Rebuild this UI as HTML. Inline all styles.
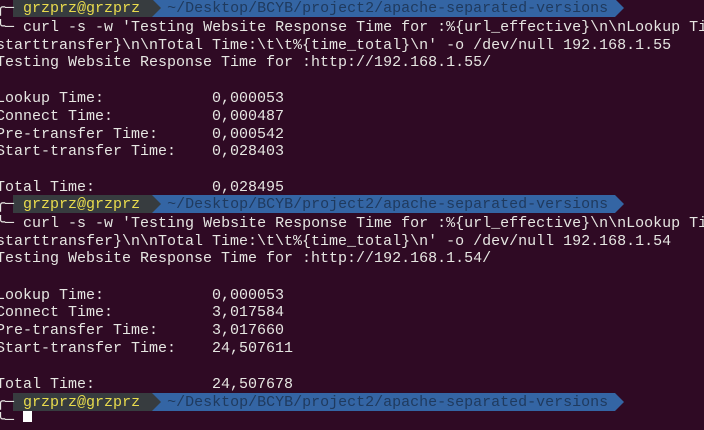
<!DOCTYPE html><html><head><style>
html,body{margin:0;padding:0;background:#2f0a24;width:704px;height:422px;overflow:hidden}
.r{position:absolute;left:-4px;height:17.8px;line-height:17.8px;font-family:"Liberation Mono","DejaVu Sans Mono",monospace;font-size:15px;color:#e6e6e2;white-space:pre;letter-spacing:0;width:708px;overflow:hidden}
.bar{position:absolute;height:17.8px}
.g{background:#373c3f;left:13px;width:139px}
.b{background:#3465a4;left:152px;width:463px}
.y{color:#e9dc4d}
.p{color:#1f3a5e}
</style></head><body>
<div class="bar g" style="top:-1px"></div><div class="bar b" style="top:-1px"></div>
<svg style="position:absolute;left:152px;top:-1px" width="10" height="18"><polygon points="0,0 9,9 0,18" fill="#373c3f"/></svg>
<svg style="position:absolute;left:615px;top:-1px" width="10" height="18"><polygon points="0,0 9,9 0,18" fill="#3465a4"/></svg>
<div class="bar g" style="top:195px"></div><div class="bar b" style="top:195px"></div>
<svg style="position:absolute;left:152px;top:195px" width="10" height="18"><polygon points="0,0 9,9 0,18" fill="#373c3f"/></svg>
<svg style="position:absolute;left:615px;top:195px" width="10" height="18"><polygon points="0,0 9,9 0,18" fill="#3465a4"/></svg>
<div class="bar g" style="top:393px"></div><div class="bar b" style="top:393px"></div>
<svg style="position:absolute;left:152px;top:393px" width="10" height="18"><polygon points="0,0 9,9 0,18" fill="#373c3f"/></svg>
<svg style="position:absolute;left:615px;top:393px" width="10" height="18"><polygon points="0,0 9,9 0,18" fill="#3465a4"/></svg>

<div class="r" style="top:0px">╭─ <span class="y">grzprz@grzprz</span>   <span class="p">~/Desktop/BCYB/project2/apache-separated-versions</span></div>
<div class="r" style="top:18.8px">╰─ curl -s -w 'Testing Website Response Time for :%{url_effective}\n\nLookup Ti</div>
<div class="r" style="top:36.6px">starttransfer}\n\nTotal Time:\t\t%{time_total}\n' -o /dev/null 192.168.1.55</div>
<div class="r" style="top:54.4px">Testing Website Response Time for :http://192.168.1.55/</div>
<div class="r" style="top:90px">Lookup Time:            0,000053</div>
<div class="r" style="top:107.8px">Connect Time:           0,000487</div>
<div class="r" style="top:125.6px">Pre-transfer Time:      0,000542</div>
<div class="r" style="top:143.4px">Start-transfer Time:    0,028403</div>
<div class="r" style="top:179px">Total Time:             0,028495</div>
<div class="r" style="top:196px">╭─ <span class="y">grzprz@grzprz</span>   <span class="p">~/Desktop/BCYB/project2/apache-separated-versions</span></div>
<div class="r" style="top:214.8px">╰─ curl -s -w 'Testing Website Response Time for :%{url_effective}\n\nLookup Ti</div>
<div class="r" style="top:232.6px">starttransfer}\n\nTotal Time:\t\t%{time_total}\n' -o /dev/null 192.168.1.54</div>
<div class="r" style="top:250.4px">Testing Website Response Time for :http://192.168.1.54/</div>
<div class="r" style="top:286.6px">Lookup Time:            0,000053</div>
<div class="r" style="top:304.4px">Connect Time:           3,017584</div>
<div class="r" style="top:322.2px">Pre-transfer Time:      3,017660</div>
<div class="r" style="top:340px">Start-transfer Time:    24,507611</div>
<div class="r" style="top:375.6px">Total Time:             24,507678</div>
<div class="r" style="top:394px">╭─ <span class="y">grzprz@grzprz</span>   <span class="p">~/Desktop/BCYB/project2/apache-separated-versions</span></div>
<div class="r" style="top:411.8px">╰─ </div>
<div style="position:absolute;left:23px;top:411px;width:9px;height:11px;background:#fff"></div>
</body></html>
